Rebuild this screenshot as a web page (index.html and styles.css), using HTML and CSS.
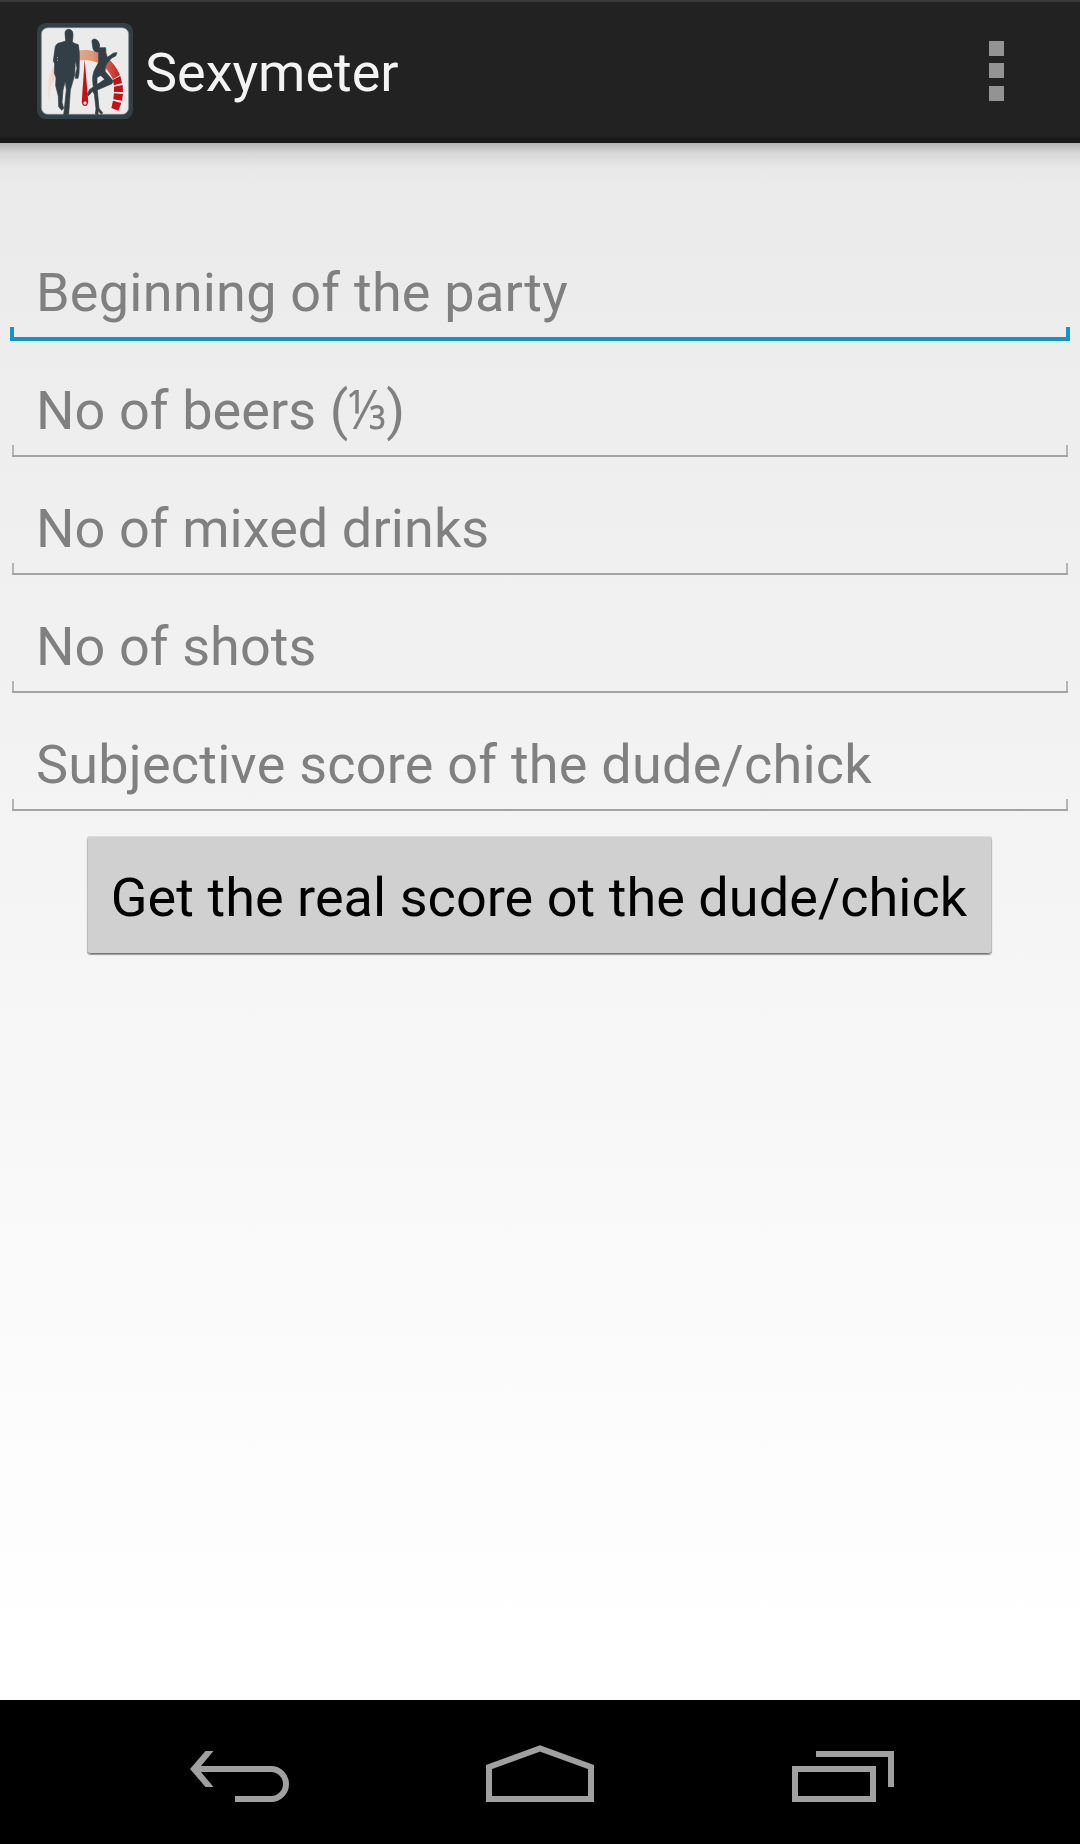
FILE: index.html
```html
<!DOCTYPE html>
<html lang="en">
<head>
<meta charset="utf-8">
<title>Sexymeter</title>
<link rel="stylesheet" href="styles.css">
</head>
<body>
<div class="screen">
  <header class="action-bar">
    <svg class="app-icon" viewBox="21 24 288 288" aria-hidden="true">
      <defs>
        <linearGradient id="dial" x1="50" y1="0" x2="272" y2="0" gradientUnits="userSpaceOnUse">
          <stop offset="0" stop-color="#f3e4df"/>
          <stop offset=".2" stop-color="#edc0ae"/>
          <stop offset=".62" stop-color="#dc9775"/>
          <stop offset="1" stop-color="#c9201c"/>
        </linearGradient>
      </defs>
      <rect x="21" y="24" width="288" height="288" rx="26" fill="#333f46"/>
      <rect x="34" y="38" width="262" height="260" rx="20" fill="#ebebeb" stroke="#7c8589" stroke-width="2"/>
      <path d="M60 272C44 210 55 165 85 135C125 97 190 96 228 125Q256 147 270 180L249 193Q232 158 210 146Q160 124 120 146C75 175 55 205 60 272Z" fill="url(#dial)"/>
      <path d="M248 195L271 183L276 204L252 211ZM252 215L278 210L279 231L252 231ZM252 235L279 237L276 257L250 253ZM249 257L274 264L265 287L244 279Z" fill="#c41017"/>
      <path d="M164 134L174 250Q177 273 165 273Q153 273 156 250Z" fill="#c41017"/>
      <path d="M160 264h10M165 259v10" stroke="#ebebeb" stroke-width="4"/>
      <g fill="#333f46" stroke="#333f46" stroke-width="2" stroke-linejoin="round">
        <path d="M105 55Q105 43 117 43Q129 45 129 57Q129 70 127 80Q130 85 145 89Q149 110 148 140L147 175L144 190L136 190L137 175L141 160L136 135L134 180L121 225L116 299L101 299L103 282L109 224L106 198L99 225L96 262L101 280L95 286L86 275L85 244L77 212L78 188L73 174L74 147L70 137L76 94Q80 84 95 82L107 78Z"/>
        <path d="M186 82Q184 72 195 72Q207 76 209 90L208 98L227 98Q226 113 232 127L251 114L261 113L257 123L245 129L231 145Q223 158 226 170L249 197L246 206L202 225L207 280L218 293L215 298L208 292L205 286L204 299L196 297L198 281L193 237L187 229L176 242L172 239L178 224L190 216Q184 180 195 162L206 142L206 112Q190 110 189 101Z"/>
      </g>
      <path d="M212 182L223 193L202 207L202 188Z" fill="#ebebeb"/>
      <path d="M81 128h3M81 136h3" stroke="#ebebeb" stroke-width="2"/>
    </svg>
    <h1 class="title">Sexymeter</h1>
    <svg class="overflow" viewBox="0 0 15 60" fill="#939393" aria-label="More options"><path d="M0 0h15v15H0zM0 22h15v15H0zM0 45h15v15H0z"/></svg>
  </header>
  <main class="content">
    <div class="field focused"><span class="hint wide">Beginning of the party</span></div>
    <div class="field"><span class="hint">No of beers (<span class="fraction">⅓</span>)</span></div>
    <div class="field"><span class="hint">No of mixed drinks</span></div>
    <div class="field"><span class="hint">No of shots</span></div>
    <div class="field"><span class="hint wide">Subjective score of the dude/chick</span></div>
    <button class="submit" type="button">Get the real score ot the dude/chick</button>
  </main>
  <nav class="nav-bar">
    <svg class="nav-icon" viewBox="0 0 108 60"><path d="M16 24H91a15 15 0 0 1 0 30H55"/><path class="arrow-head" d="M10 24L25.500 6H33.500L18.500 24L33.500 42H25.500Z"/></svg>
    <svg class="nav-icon" viewBox="0 0 108 60"><path d="M3 54V22L54 3.500L105 22V54Z"/></svg>
    <svg class="nav-icon" viewBox="0 0 108 60"><path d="M3 24H81V54H3ZM24 9H99V42"/></svg>
  </nav>
</div>
</body>
</html>
```
FILE: styles.css
```css
* { box-sizing: border-box; }

body {
  margin: 0;
  font-family: Roboto, sans-serif;
  font-size: 54px;
  line-height: 64px;
}

.screen {
  display: flex;
  flex-direction: column;
  width: 1080px;
  height: 1844px;
}

.action-bar {
  display: flex;
  align-items: center;
  height: 143px;
  padding: 0 76px 0 37px;
  background: #222;
  border-top: 2px solid #3a3a3a;
  border-bottom: 6px solid #1a1a1a;
}

.app-icon { width: 96px; height: 96px; margin-top: 2px; }

.title {
  margin: 7px 0 0 12px;
  font-size: 54px;
  font-weight: 400;
  color: #f3f3f3;
}

.overflow { width: 15px; height: 60px; margin: 3px 0 0 auto; }

.content {
  display: flex;
  flex: 1;
  flex-direction: column;
  align-items: center;
  padding: 80px 10px 0;
  background:
    linear-gradient(#b4b4b4 0, rgba(200, 200, 200, .55) 10px, rgba(225, 225, 225, .2) 25px, rgba(232, 232, 232, 0) 42px) top / 100% 42px no-repeat,
    linear-gradient(#eaeaea, #fff 97%);
}

.field {
  width: 1056px;
  height: 118px;
  padding: 38px 24px 0;
  color: #808080;
  background:
    linear-gradient(#a3a3a3, #a3a3a3) 0 114px / 100% 2px no-repeat,
    linear-gradient(#b5b5b5, #b5b5b5) 0 104px / 2px 12px no-repeat,
    linear-gradient(#b5b5b5, #b5b5b5) 100% 104px / 2px 12px no-repeat;
}

.field.focused {
  width: 1060px;
  padding-left: 26px;
  background:
    linear-gradient(#1295c0, #1295c0) 0 114px / 100% 4px no-repeat,
    linear-gradient(#1295c0, #1295c0) 0 104px / 4px 14px no-repeat,
    linear-gradient(#1295c0, #1295c0) 100% 104px / 4px 14px no-repeat;
}

.hint { white-space: nowrap; letter-spacing: .08px; }

.hint.wide { letter-spacing: .23px; }

.fraction {
  display: inline-block;
  margin-right: -7px;
  font-family: "Noto Sans", sans-serif;
  line-height: 1;
  transform: scaleX(.88);
  transform-origin: left;
}

.submit {
  width: 905px;
  height: 118px;
  margin: 23px 2px 0 0;
  padding: 5px 0 0;
  border: 0;
  border-radius: 4px;
  background: #d0d0d0;
  box-shadow: inset 0 1px #dcdcdc, inset 1px 0 #bdbdbd, inset -1px 0 #bdbdbd, inset 0 -1px #777, 0 1px 1px #999;
  font: inherit;
  letter-spacing: .05px;
  color: #000;
  white-space: nowrap;
}

.nav-bar {
  display: flex;
  justify-content: center;
  gap: 198px;
  height: 144px;
  padding-top: 45px;
  background: #000;
}

.nav-icon {
  width: 108px;
  height: 60px;
  overflow: visible;
  fill: none;
  stroke: #a0a0a0;
  stroke-width: 6px;
}

.arrow-head { fill: #a0a0a0; stroke: none; }
```
